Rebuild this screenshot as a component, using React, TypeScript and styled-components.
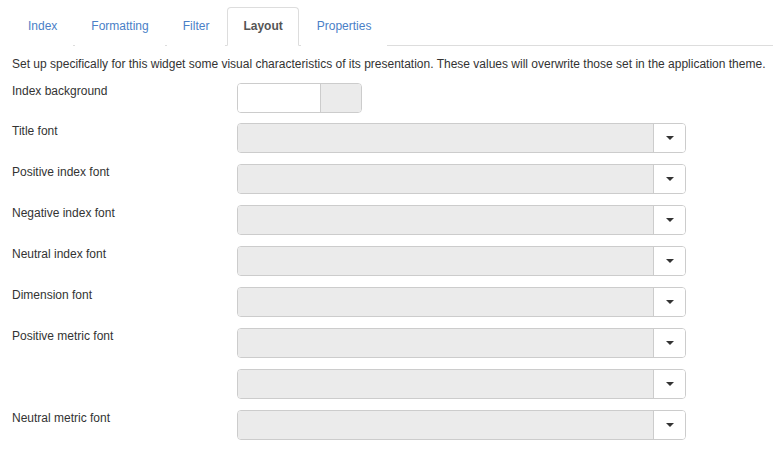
import React from "react";
import styled, { createGlobalStyle } from "styled-components";

const Global = createGlobalStyle`
  html, body { margin: 0; padding: 0; background: #fff; }
  body { font-family: "Liberation Sans", Arial, sans-serif; font-size: 12px; line-height: 17px; color: #333; }
  * { box-sizing: border-box; }
`;

const Page = styled.div`
  padding: 7px 0 0 12px;
`;

const TabBar = styled.ul`
  display: flex;
  list-style: none;
  margin: 0;
  padding: 0;
  border-bottom: 1px solid #ddd;
`;

const Tab = styled.li<{ $active?: boolean }>`
  margin-right: 2px;
  margin-bottom: -1px;
  padding: 10px 15px;
  border: 1px solid ${(p) => (p.$active ? "#ddd" : "transparent")};
  border-bottom-color: ${(p) => (p.$active ? "#fff" : "transparent")};
  border-radius: 4px 4px 0 0;
  background: #fff;
  color: ${(p) => (p.$active ? "#555" : "#4a7fc7")};
  font-weight: ${(p) => (p.$active ? "bold" : "normal")};
  cursor: pointer;
`;

const Description = styled.p`
  margin: 10px 0 10px 0;
`;

const Form = styled.div`
  display: flex;
  flex-direction: column;
  gap: 11px;
`;

const Row = styled.div`
  display: grid;
  grid-template-columns: 225px 449px;
  align-items: start;
`;

const Label = styled.label`
  display: block;
  padding-top: 0;
  min-height: 30px;
`;

const ColorPicker = styled.div`
  display: flex;
  width: 125px;
  height: 30px;
  border: 1px solid #ccc;
  border-radius: 4px;
  overflow: hidden;
`;

const ColorInput = styled.div`
  flex: 1;
  background: #fff;
  border-right: 1px solid #ccc;
`;

const ColorSwatch = styled.div`
  width: 40px;
  background: #ebebeb;
`;

const Select = styled.div`
  display: flex;
  height: 30px;
  border: 1px solid #ccc;
  border-radius: 4px;
  overflow: hidden;
`;

const SelectValue = styled.div`
  flex: 1;
  background: #ebebeb;
`;

const SelectButton = styled.div`
  width: 32px;
  border-left: 1px solid #ccc;
  background: #fff;
  display: flex;
  align-items: center;
  justify-content: center;
`;

const Caret = styled.span`
  width: 0;
  height: 0;
  border-left: 4px solid transparent;
  border-right: 4px solid transparent;
  border-top: 4px solid #333;
`;

const tabs = ["Index", "Formatting", "Filter", "Layout", "Properties"];
const fonts = [
  "Title font",
  "Positive index font",
  "Negative index font",
  "Neutral index font",
  "Dimension font",
  "Positive metric font",
  "",
  "Neutral metric font",
];

export default function App() {
  return (
    <>
      <Global />
      <Page>
        <TabBar>
          {tabs.map((t) => (
            <Tab key={t} $active={t === "Layout"}>
              {t}
            </Tab>
          ))}
        </TabBar>
        <Description>
          Set up specifically for this widget some visual characteristics of its presentation. These values will overwrite those set in the application theme.
        </Description>
        <Form>
          <Row style={{ marginBottom: -1 }}>
            <Label>Index background</Label>
            <ColorPicker>
              <ColorInput />
              <ColorSwatch />
            </ColorPicker>
          </Row>
          {fonts.map((f, i) => (
            <Row key={i}>
              <Label>{f}</Label>
              <Select>
                <SelectValue />
                <SelectButton>
                  <Caret />
                </SelectButton>
              </Select>
            </Row>
          ))}
        </Form>
      </Page>
    </>
  );
}
